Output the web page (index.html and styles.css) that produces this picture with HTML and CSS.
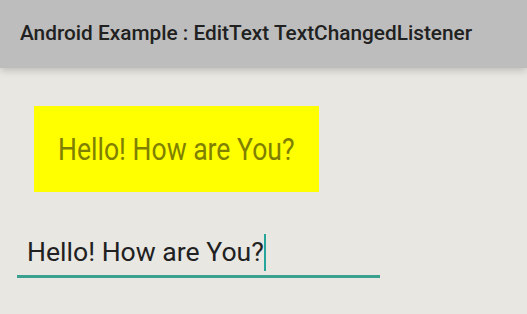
FILE: index.html
```html
<!DOCTYPE html>
<html lang="en">
<head>
  <meta charset="UTF-8" />
  <meta name="viewport" content="width=device-width, initial-scale=1.0" />
  <title>EditText TextChangedListener</title>
  <link rel="stylesheet" href="styles.css">
</head>
<body>
<div class="toolbar">
  <h1 class="title">Android Example : EditText TextChangedListener</h1>
</div>

<div class="content">
  <!-- TextView que refleja lo escrito -->
  <div class="preview">
    <span class="preview-text">Hello! How are You?</span>
  </div>

  <!-- EditText -->
  <div class="edit">
    <span class="edit-text">Hello! How are You?</span><span class="cursor"></span>
  </div>
</div>
</body>
</html>
```

FILE: styles.css
```css
html, body {
  margin: 0;
  height: 100%;
}

body {
  background: #e8e7e2;
  font-family: Roboto, "Liberation Sans", sans-serif;
  overflow: hidden;
}

.toolbar {
  height: 68px;
  background: #bdbdbd;
  box-shadow: 0 2px 8px rgba(0,0,0,0.2);
  position: relative;
  z-index: 1;
}

.title {
  margin: 0;
  padding: 22px 0 0 20px;
  font-size: 20.8px;
  line-height: 22px;
  font-weight: 500;
  color: #212121;
  white-space: nowrap;
}

.content {
  padding: 38px 0 0 17px;
}

.preview {
  display: inline-flex;
  align-items: center;
  margin-left: 17px;
  width: 285px;
  height: 86px;
  background: #ffff00;
}

.preview-text {
  margin-left: 24px;
  font-size: 32px;
  color: #808000;
  white-space: nowrap;
  transform: scaleX(0.83);
  transform-origin: left center;
}

.edit {
  margin-top: 38px;
  width: 363px;
  height: 45px;
  border-bottom: 3px solid #3aa191;
  display: flex;
  align-items: center;
}

.edit-text {
  margin-left: 10px;
  margin-bottom: 3px;
  font-size: 26.6px;
  color: #212121;
  white-space: nowrap;
}

.cursor {
  width: 2px;
  height: 37px;
  background: #26a69a;
}
```
